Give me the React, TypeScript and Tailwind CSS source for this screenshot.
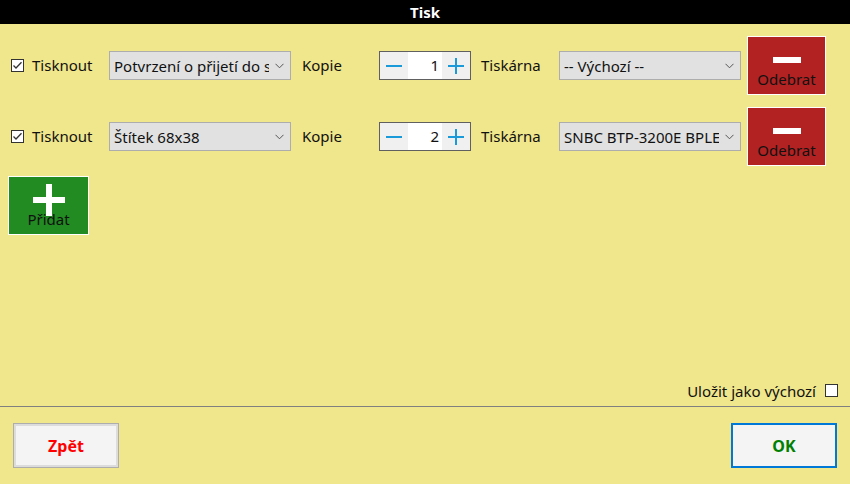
import React from "react";

const font = { fontFamily: '"Noto Sans", "Open Sans", sans-serif' };

function Check({ checked }: { checked: boolean }) {
  return (
    <svg width="13" height="13" viewBox="0 0 13 13" className="shrink-0">
      <rect x="0.5" y="0.5" width="12" height="12" fill="#fff" stroke="#333" />
      {checked && <path d="M2.5 6.5 L5 9 L10.5 3.2" fill="none" stroke="#333" strokeWidth="1.3" />}
    </svg>
  );
}

function Chevron() {
  return (
    <svg width="9" height="6" viewBox="0 0 9 6" className="shrink-0">
      <path d="M0.5 0.8 L4.5 4.8 L8.5 0.8" fill="none" stroke="#555" strokeWidth="1" />
    </svg>
  );
}

function Select({ text, w }: { text: string; w: string }) {
  return (
    <div className={`${w} h-[29px] bg-[#e1e1e1] border border-[#adadad] flex items-center pl-[4px] pr-[6px] gap-[6px] shrink-0`}>
      <div className="flex-1 overflow-hidden whitespace-nowrap text-[15px] text-[#111] leading-[20px]">{text}</div>
      <Chevron />
    </div>
  );
}

function Spinner({ value }: { value: number }) {
  return (
    <div className="w-[92px] h-[29px] border border-[#606060] flex shrink-0">
      <div className="w-[28px] bg-[#f0f0f0] flex items-center justify-center">
        <div className="w-[16px] h-[2px] bg-[#1a9ad9]" />
      </div>
      <div className="flex-1 bg-white flex items-center justify-end pr-[3px] text-[15px] text-[#111]">{value}</div>
      <div className="w-[28px] bg-[#f0f0f0] flex items-center justify-center relative">
        <div className="w-[16px] h-[2px] bg-[#1a9ad9]" />
        <div className="absolute w-[2px] h-[16px] bg-[#1a9ad9]" />
      </div>
    </div>
  );
}

function Odebrat() {
  return (
    <div className="w-[79px] h-[59px] bg-[#b22222] border border-white flex flex-col items-center shrink-0">
      <div className="mt-[20px] w-[28px] h-[6px] bg-white" />
      <div className="mt-[9px] text-[15px] leading-none text-[#111]">Odebrat</div>
    </div>
  );
}

function Row({ doc, copies, printer }: { doc: string; copies: number; printer: string }) {
  return (
    <div className="flex items-center h-[59px]">
      <div className="w-[109px] flex items-center pl-[11px] gap-[8px] shrink-0">
        <Check checked />
        <span className="text-[15px] text-[#111]">Tisknout</span>
      </div>
      <Select text={doc} w="w-[182px]" />
      <div className="w-[88px] pl-[11px] text-[15px] text-[#111] shrink-0">Kopie</div>
      <Spinner value={copies} />
      <div className="w-[88px] pl-[10px] text-[15px] text-[#111] shrink-0">Tiskárna</div>
      <Select text={printer} w="w-[182px]" />
      <div className="w-[6px] shrink-0" />
      <Odebrat />
    </div>
  );
}

export default function App() {
  return (
    <div className="w-[850px] h-[484px] bg-[#f0e68c] flex flex-col overflow-hidden" style={font}>
      <div className="h-[24px] bg-black text-white font-bold text-[15px] flex items-center justify-center shrink-0">Tisk</div>
      <div className="flex-1 flex flex-col pt-[12px]">
        <Row doc="Potvrzení o přijetí do servisu" copies={1} printer="-- Výchozí --" />
        <div className="h-[12px]" />
        <Row doc="Štítek 68x38" copies={2} printer="SNBC BTP-3200E BPLE" />
        <div className="h-[10px]" />
        <div className="pl-[8px]">
          <div className="w-[81px] h-[59px] bg-[#228b22] border border-white relative flex flex-col items-center">
            <div className="absolute left-[24px] top-[20px] w-[32px] h-[6px] bg-white" />
            <div className="absolute left-[37px] top-[7px] w-[6px] h-[32px] bg-white" />
            <div className="absolute top-[35px] w-full text-center text-[15px] leading-none text-[#111]">Přidat</div>
          </div>
        </div>
        <div className="flex-1" />
        <div className="flex items-center justify-end gap-[9px] pr-[12px] pb-[4px]">
          <span className="text-[15px] text-[#111]">Uložit jako výchozí</span>
          <Check checked={false} />
        </div>
      </div>
      <div className="h-px bg-[#808080] shrink-0" />
      <div className="h-[77px] flex items-start justify-between px-[13px] pt-[16px] shrink-0">
        <div className="w-[106px] h-[45px] border border-[#adadad] bg-[#f4f4f4] shadow-[inset_0_0_0_2px_#dcdcdc] flex items-center justify-center text-[#ff0000] font-bold text-[16px]">Zpět</div>
        <div className="w-[106px] h-[45px] border-2 border-[#0078d7] bg-[#f4f4f4] flex items-center justify-center text-[#008000] font-bold text-[16px]">OK</div>
      </div>
    </div>
  );
}
